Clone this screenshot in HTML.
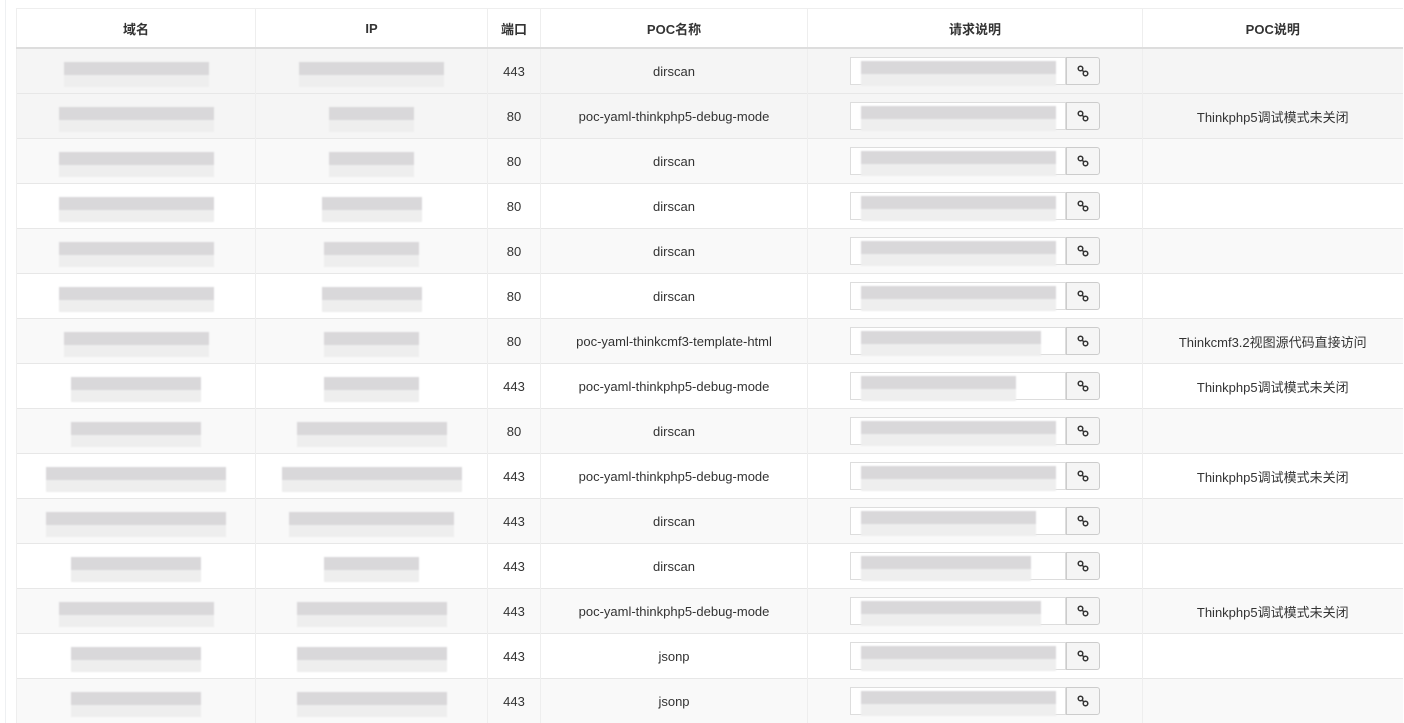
<!DOCTYPE html>
<html><head><meta charset="utf-8"><style>
body{margin:0;background:#fff;width:1404px;height:723px;overflow:hidden;font-family:"Liberation Sans","Noto Sans CJK SC",sans-serif;font-size:13px;color:#333}
.lb{position:absolute;left:5px;top:0;width:1px;height:723px;background:#eef0f2}
table{position:absolute;left:16px;top:8px;border-collapse:collapse;table-layout:fixed;width:1386px;border-top:1px solid #eee}
th{height:38px;font-weight:bold;border-bottom:2px solid #ddd;border-left:1px solid #eee;text-align:center;padding:0}
td{height:44px;border-top:1px solid #e7e7e7;border-left:1px solid #eee;text-align:center;padding:0;position:relative}
tr:nth-child(even) td{background:#f9f9f9}
tr.h td{background:#f5f5f5}
.b{display:inline-block;height:13px;background:#d9d8da;box-shadow:0 12px 0 #eeeeee;vertical-align:middle;position:relative;top:-4px;filter:blur(.8px)}
.ig{position:absolute;left:42px;top:8px;width:250px;height:28px}
.in{position:absolute;left:0;top:0;width:214px;height:26px;border:1px solid #ddd;background:#fff}
.in .b{position:absolute;left:10px;top:3px}
.bt{position:absolute;left:216px;top:0;width:32px;height:26px;border:1px solid #ccc;border-radius:0 3px 3px 0;background:#f5f5f5}
.bt svg{position:absolute;left:10px;top:7px}
</style></head><body><div class="lb"></div>
<table>
<colgroup><col style="width:239px"><col style="width:232px"><col style="width:53px"><col style="width:267px"><col style="width:335px"><col style="width:260px"></colgroup>
<tr><th>域名</th><th>IP</th><th>端口</th><th>POC名称</th><th>请求说明</th><th>POC说明</th></tr>
<tr class="h"><td><span class="b" style="width:145px"></span></td><td><span class="b" style="width:145px"></span></td><td>443</td><td>dirscan</td><td><div class="ig"><div class="in"><span class="b" style="width:195px"></span></div><div class="bt"><svg width="12" height="12" viewBox="0 0 12 12"><circle cx="3.5" cy="3.5" r="2.3" fill="none" stroke="#333" stroke-width="1.5"/><circle cx="8.5" cy="8.5" r="2.3" fill="none" stroke="#333" stroke-width="1.5"/><path d="M5 5L7 7" stroke="#333" stroke-width="1.5"/></svg></div></div></td><td></td></tr>
<tr class="h"><td><span class="b" style="width:155px"></span></td><td><span class="b" style="width:85px"></span></td><td>80</td><td>poc-yaml-thinkphp5-debug-mode</td><td><div class="ig"><div class="in"><span class="b" style="width:195px"></span></div><div class="bt"><svg width="12" height="12" viewBox="0 0 12 12"><circle cx="3.5" cy="3.5" r="2.3" fill="none" stroke="#333" stroke-width="1.5"/><circle cx="8.5" cy="8.5" r="2.3" fill="none" stroke="#333" stroke-width="1.5"/><path d="M5 5L7 7" stroke="#333" stroke-width="1.5"/></svg></div></div></td><td>Thinkphp5调试模式未关闭</td></tr>
<tr><td><span class="b" style="width:155px"></span></td><td><span class="b" style="width:85px"></span></td><td>80</td><td>dirscan</td><td><div class="ig"><div class="in"><span class="b" style="width:195px"></span></div><div class="bt"><svg width="12" height="12" viewBox="0 0 12 12"><circle cx="3.5" cy="3.5" r="2.3" fill="none" stroke="#333" stroke-width="1.5"/><circle cx="8.5" cy="8.5" r="2.3" fill="none" stroke="#333" stroke-width="1.5"/><path d="M5 5L7 7" stroke="#333" stroke-width="1.5"/></svg></div></div></td><td></td></tr>
<tr><td><span class="b" style="width:155px"></span></td><td><span class="b" style="width:100px"></span></td><td>80</td><td>dirscan</td><td><div class="ig"><div class="in"><span class="b" style="width:195px"></span></div><div class="bt"><svg width="12" height="12" viewBox="0 0 12 12"><circle cx="3.5" cy="3.5" r="2.3" fill="none" stroke="#333" stroke-width="1.5"/><circle cx="8.5" cy="8.5" r="2.3" fill="none" stroke="#333" stroke-width="1.5"/><path d="M5 5L7 7" stroke="#333" stroke-width="1.5"/></svg></div></div></td><td></td></tr>
<tr><td><span class="b" style="width:155px"></span></td><td><span class="b" style="width:95px"></span></td><td>80</td><td>dirscan</td><td><div class="ig"><div class="in"><span class="b" style="width:195px"></span></div><div class="bt"><svg width="12" height="12" viewBox="0 0 12 12"><circle cx="3.5" cy="3.5" r="2.3" fill="none" stroke="#333" stroke-width="1.5"/><circle cx="8.5" cy="8.5" r="2.3" fill="none" stroke="#333" stroke-width="1.5"/><path d="M5 5L7 7" stroke="#333" stroke-width="1.5"/></svg></div></div></td><td></td></tr>
<tr><td><span class="b" style="width:155px"></span></td><td><span class="b" style="width:100px"></span></td><td>80</td><td>dirscan</td><td><div class="ig"><div class="in"><span class="b" style="width:195px"></span></div><div class="bt"><svg width="12" height="12" viewBox="0 0 12 12"><circle cx="3.5" cy="3.5" r="2.3" fill="none" stroke="#333" stroke-width="1.5"/><circle cx="8.5" cy="8.5" r="2.3" fill="none" stroke="#333" stroke-width="1.5"/><path d="M5 5L7 7" stroke="#333" stroke-width="1.5"/></svg></div></div></td><td></td></tr>
<tr><td><span class="b" style="width:145px"></span></td><td><span class="b" style="width:95px"></span></td><td>80</td><td>poc-yaml-thinkcmf3-template-html</td><td><div class="ig"><div class="in"><span class="b" style="width:180px"></span></div><div class="bt"><svg width="12" height="12" viewBox="0 0 12 12"><circle cx="3.5" cy="3.5" r="2.3" fill="none" stroke="#333" stroke-width="1.5"/><circle cx="8.5" cy="8.5" r="2.3" fill="none" stroke="#333" stroke-width="1.5"/><path d="M5 5L7 7" stroke="#333" stroke-width="1.5"/></svg></div></div></td><td>Thinkcmf3.2视图源代码直接访问</td></tr>
<tr><td><span class="b" style="width:130px"></span></td><td><span class="b" style="width:95px"></span></td><td>443</td><td>poc-yaml-thinkphp5-debug-mode</td><td><div class="ig"><div class="in"><span class="b" style="width:155px"></span></div><div class="bt"><svg width="12" height="12" viewBox="0 0 12 12"><circle cx="3.5" cy="3.5" r="2.3" fill="none" stroke="#333" stroke-width="1.5"/><circle cx="8.5" cy="8.5" r="2.3" fill="none" stroke="#333" stroke-width="1.5"/><path d="M5 5L7 7" stroke="#333" stroke-width="1.5"/></svg></div></div></td><td>Thinkphp5调试模式未关闭</td></tr>
<tr><td><span class="b" style="width:130px"></span></td><td><span class="b" style="width:150px"></span></td><td>80</td><td>dirscan</td><td><div class="ig"><div class="in"><span class="b" style="width:195px"></span></div><div class="bt"><svg width="12" height="12" viewBox="0 0 12 12"><circle cx="3.5" cy="3.5" r="2.3" fill="none" stroke="#333" stroke-width="1.5"/><circle cx="8.5" cy="8.5" r="2.3" fill="none" stroke="#333" stroke-width="1.5"/><path d="M5 5L7 7" stroke="#333" stroke-width="1.5"/></svg></div></div></td><td></td></tr>
<tr><td><span class="b" style="width:180px"></span></td><td><span class="b" style="width:180px"></span></td><td>443</td><td>poc-yaml-thinkphp5-debug-mode</td><td><div class="ig"><div class="in"><span class="b" style="width:195px"></span></div><div class="bt"><svg width="12" height="12" viewBox="0 0 12 12"><circle cx="3.5" cy="3.5" r="2.3" fill="none" stroke="#333" stroke-width="1.5"/><circle cx="8.5" cy="8.5" r="2.3" fill="none" stroke="#333" stroke-width="1.5"/><path d="M5 5L7 7" stroke="#333" stroke-width="1.5"/></svg></div></div></td><td>Thinkphp5调试模式未关闭</td></tr>
<tr><td><span class="b" style="width:180px"></span></td><td><span class="b" style="width:165px"></span></td><td>443</td><td>dirscan</td><td><div class="ig"><div class="in"><span class="b" style="width:175px"></span></div><div class="bt"><svg width="12" height="12" viewBox="0 0 12 12"><circle cx="3.5" cy="3.5" r="2.3" fill="none" stroke="#333" stroke-width="1.5"/><circle cx="8.5" cy="8.5" r="2.3" fill="none" stroke="#333" stroke-width="1.5"/><path d="M5 5L7 7" stroke="#333" stroke-width="1.5"/></svg></div></div></td><td></td></tr>
<tr><td><span class="b" style="width:130px"></span></td><td><span class="b" style="width:95px"></span></td><td>443</td><td>dirscan</td><td><div class="ig"><div class="in"><span class="b" style="width:170px"></span></div><div class="bt"><svg width="12" height="12" viewBox="0 0 12 12"><circle cx="3.5" cy="3.5" r="2.3" fill="none" stroke="#333" stroke-width="1.5"/><circle cx="8.5" cy="8.5" r="2.3" fill="none" stroke="#333" stroke-width="1.5"/><path d="M5 5L7 7" stroke="#333" stroke-width="1.5"/></svg></div></div></td><td></td></tr>
<tr><td><span class="b" style="width:155px"></span></td><td><span class="b" style="width:150px"></span></td><td>443</td><td>poc-yaml-thinkphp5-debug-mode</td><td><div class="ig"><div class="in"><span class="b" style="width:180px"></span></div><div class="bt"><svg width="12" height="12" viewBox="0 0 12 12"><circle cx="3.5" cy="3.5" r="2.3" fill="none" stroke="#333" stroke-width="1.5"/><circle cx="8.5" cy="8.5" r="2.3" fill="none" stroke="#333" stroke-width="1.5"/><path d="M5 5L7 7" stroke="#333" stroke-width="1.5"/></svg></div></div></td><td>Thinkphp5调试模式未关闭</td></tr>
<tr><td><span class="b" style="width:130px"></span></td><td><span class="b" style="width:150px"></span></td><td>443</td><td>jsonp</td><td><div class="ig"><div class="in"><span class="b" style="width:195px"></span></div><div class="bt"><svg width="12" height="12" viewBox="0 0 12 12"><circle cx="3.5" cy="3.5" r="2.3" fill="none" stroke="#333" stroke-width="1.5"/><circle cx="8.5" cy="8.5" r="2.3" fill="none" stroke="#333" stroke-width="1.5"/><path d="M5 5L7 7" stroke="#333" stroke-width="1.5"/></svg></div></div></td><td></td></tr>
<tr><td><span class="b" style="width:130px"></span></td><td><span class="b" style="width:150px"></span></td><td>443</td><td>jsonp</td><td><div class="ig"><div class="in"><span class="b" style="width:195px"></span></div><div class="bt"><svg width="12" height="12" viewBox="0 0 12 12"><circle cx="3.5" cy="3.5" r="2.3" fill="none" stroke="#333" stroke-width="1.5"/><circle cx="8.5" cy="8.5" r="2.3" fill="none" stroke="#333" stroke-width="1.5"/><path d="M5 5L7 7" stroke="#333" stroke-width="1.5"/></svg></div></div></td><td></td></tr>
</table>
</body></html>
